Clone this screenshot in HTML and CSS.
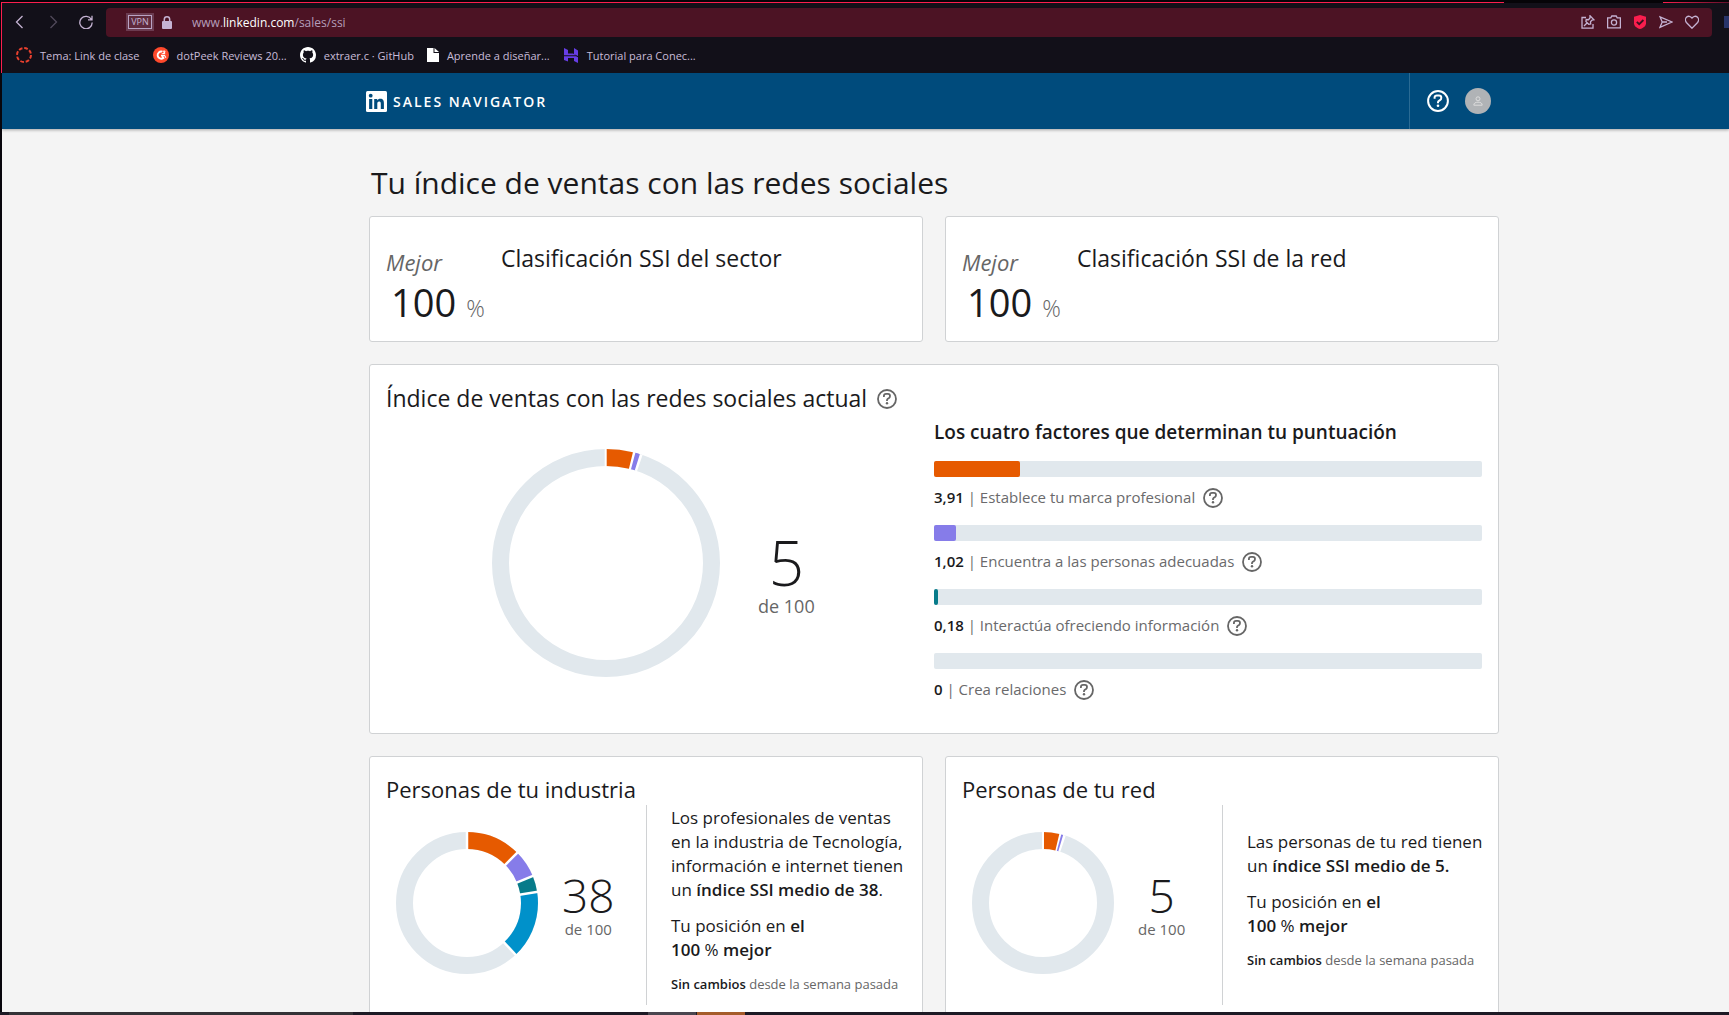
FILE: index.html
```html
<!DOCTYPE html>
<html lang="es">
<head>
<meta charset="utf-8">
<title>Índice de ventas con las redes sociales</title>
<link rel="stylesheet" href="styles.css">
</head>
<body>
<svg class="defs" width="0" height="0" aria-hidden="true">
  <symbol id="help" viewBox="0 0 20 20">
    <circle cx="10" cy="10" r="9" fill="none" stroke="currentColor" stroke-width="1.8"/>
    <path d="M6.9 8V6.9Q6.9 4.9 9 4.9h1.9Q13 4.9 13 7q0 1.500-1.200 2.200L10.800 9.800Q10 10.300 10 11.200v.8" fill="none" stroke="currentColor" stroke-width="1.800"/>
    <circle cx="10" cy="14.300" r="1.200" fill="currentColor"/>
  </symbol>
</svg>

<header class="browser">
  <div class="tab-edge"><span class="edge-active"></span><span class="edge-next"></span></div>
  <div class="toolbar">
    <div class="history">
      <button class="tool" aria-label="Atrás"><svg width="14" height="14" viewBox="0 0 14 14"><path d="M9.500 1 3.500 7l6 6"/></svg></button>
      <button class="tool dim" aria-label="Adelante"><svg width="14" height="14" viewBox="0 0 14 14"><path d="M4.500 1l6 6-6 6"/></svg></button>
      <button class="tool" aria-label="Recargar"><svg width="14" height="14" viewBox="0 0 14 14"><path d="M12.400 4.500A6.200 6.200 0 1 0 13.200 7.500M13 .8v4H9"/></svg></button>
    </div>
    <div class="address">
      <span class="vpn">VPN</span>
      <svg class="lock" width="10" height="13" viewBox="0 0 10 13"><path d="M2.300 6V3.500a2.700 2.700 0 0 1 5.400 0V6" fill="none" stroke="#c5b3d3" stroke-width="1.500"/><rect y="5" width="10" height="8" rx="1" fill="#c5b3d3"/></svg>
      <span class="url">www.<b>linkedin.com</b>/sales/ssi</span>
      <div class="actions">
        <button class="tool" aria-label="Editar"><svg width="14" height="14" viewBox="0 0 14 14"><path d="M5 2.500H1v10.700h11V9M9 .8l4 4-2 .2-1.500 1.800.2 2.200-2 .3-2.800-2.800.3-2 2.300.2L9 3zM6 8l-3 3"/></svg></button>
        <button class="tool" aria-label="Captura"><svg width="14" height="14" viewBox="0 0 14 14"><path d="M.6 2.800h3.200l1-1.800h4.400l1 1.800h3.200v10H.6z"/><circle cx="7" cy="7.500" r="2.600"/></svg></button>
        <button class="tool" aria-label="Protección"><svg width="14" height="14" viewBox="0 0 14 14"><path d="M7 0l6 1.800v6.400c0 3-3 4.800-6 5.800-3-1-6-2.800-6-5.800V1.800z" fill="#fa1e4e" stroke="none"/><path d="M3.800 6.800l2.400 2.400 4.200-4.200" stroke="#3c1020" stroke-width="1.800"/></svg></button>
        <button class="tool" aria-label="Enviar"><svg width="14" height="14" viewBox="0 0 14 14"><path d="M1 1.800 13 7 1 12.300 3.200 7zM3.200 7H8"/></svg></button>
        <button class="tool" aria-label="Favoritos"><svg width="14" height="14" viewBox="0 0 14 14"><path d="M7 13.200 1.400 7.500C.2 6 .2 3.500 1.700 2.100 3.200.700 5.500 1 7 3c1.500-2 3.800-2.300 5.300-.9 1.500 1.400 1.500 3.900.3 5.400z"/></svg></button>
      </div>
    </div>
    <span class="extension"></span>
  </div>
  <nav class="bookmarks">
    <a href="#"><svg width="16" height="16" viewBox="0 0 16 16"><circle cx="8" cy="8" r="7" fill="none" stroke="#e8402e" stroke-width="2" stroke-dasharray="3.700 1.798"/></svg>Tema: Link de clase</a>
    <a href="#"><svg width="16" height="16" viewBox="0 0 16 16"><circle cx="8" cy="8" r="8" fill="#ff492c"/><path d="M9.300 4.700A3.600 3.600 0 1 0 10.400 11L9 8.900" fill="none" stroke="#fff" stroke-width="1.900"/><path d="M9.700 4.400q2.300-1 2.200.4 0 .8-2.100 2h2.400M8 8.500h3.600l1.300 2.300" fill="none" stroke="#fff" stroke-width="1.100"/></svg>dotPeek Reviews 20...</a>
    <a href="#"><svg width="16" height="16" viewBox="0 0 16 16"><path fill="#fff" d="M8 0C3.580 0 0 3.580 0 8c0 3.540 2.290 6.530 5.470 7.590.4.070.55-.17.55-.38 0-.19-.01-.82-.01-1.490-2.010.37-2.530-.49-2.690-.94-.09-.23-.48-.94-.82-1.130-.28-.15-.68-.52-.01-.53.630-.01 1.080.58 1.230.82.720 1.210 1.870.87 2.330.66.070-.52.280-.87.510-1.070-1.780-.2-3.640-.89-3.640-3.950 0-.87.310-1.590.82-2.150-.08-.2-.36-1.020.08-2.120 0 0 .67-.21 2.200.82.640-.18 1.320-.27 2-.27s1.360.09 2 .27c1.530-1.040 2.200-.82 2.200-.82.440 1.100.160 1.920.08 2.120.510.56.820 1.270.820 2.150 0 3.070-1.870 3.750-3.650 3.950.290.25.540.73.540 1.480 0 1.070-.01 1.930-.01 2.200 0 .21.150.46.550.38A8 8 0 0 0 16 8c0-4.420-3.580-8-8-8z"/></svg>extraer.c · GitHub</a>
    <a href="#"><svg width="12" height="16" viewBox="0 0 12 16"><path fill="#fff" d="M0 1h6.500v5H12v9H0zM7.500 1 12 5H7.500z"/></svg>Aprende a diseñar...</a>
    <a href="#"><svg width="16" height="16" viewBox="0 0 16 16"><path fill="#673de6" d="M1 1l4 2v3.500h5L13 8.200H1zM11 1l4 2.500V9l-4-2zM1 9.300h12l2 1V16l-4-2v-3H5v3.500L1 13z"/></svg>Tutorial para Conec...</a>
  </nav>
</header>

<div class="viewport">
  <header class="topbar">
    <a class="brand" href="#">
      <svg width="21" height="21" viewBox="0 0 21 21"><rect width="21" height="21" rx="1.500" fill="#fff"/><g fill="#004b7c"><circle cx="4.700" cy="4.700" r="1.900"/><path d="M3.100 8h3.200v10H3.100zM8.200 8h3v1.400c.6-1 1.700-1.600 3-1.600 3 0 3.700 1.900 3.700 4.500V18h-3.100v-5c0-1.300-.1-2.600-1.600-2.600-1.600 0-1.900 1.200-1.900 2.500V18H8.200z"/></g></svg>
      SALES NAVIGATOR
    </a>
    <div class="account">
      <button class="help light" aria-label="Ayuda"><svg width="22" height="22"><use href="#help"/></svg></button>
      <button class="avatar" aria-label="Perfil"><svg width="10" height="10" viewBox="0 0 10 10"><circle cx="5" cy="2.800" r="2"/><path d="M.8 9.200c0-2 1.500-3 4.200-3s4.200 1 4.200 3z"/></svg></button>
    </div>
  </header>

  <main>
    <h1>Tu índice de ventas con las redes sociales</h1>

    <div class="pair">
      <section class="card rank">
        <div class="rank-score"><em>Mejor</em><p><strong>100</strong> <span>%</span></p></div>
        <h2>Clasificación SSI del sector</h2>
      </section>
      <section class="card rank">
        <div class="rank-score"><em>Mejor</em><p><strong>100</strong> <span>%</span></p></div>
        <h2>Clasificación SSI de la red</h2>
      </section>
    </div>

    <section class="card current">
      <div class="current-score">
        <h2>Índice de ventas con las redes sociales actual <button class="help" aria-label="Ayuda"><svg width="20" height="20"><use href="#help"/></svg></button></h2>
        <div class="gauge">
          <svg width="228" height="228" viewBox="-114 -114 228 228" fill="none" stroke-width="17">
            <circle r="105.500" stroke="#e1e8ed"/>
            <g transform="rotate(-90)">
              <circle r="105.500" pathLength="100" stroke="#fff" stroke-dasharray="5.200 94.800"/>
              <circle r="105.500" pathLength="100" stroke="#e65a00" stroke-dasharray="3.800 96.200"/>
              <circle r="105.500" pathLength="100" stroke="#867ce9" stroke-dasharray="0 4.150 .65 95.200"/>
            </g>
            <path d="M-.3-114v17" stroke="#fff" stroke-width="2"/>
          </svg>
          <p class="score"><strong>5</strong>de 100</p>
        </div>
      </div>
      <div class="factors">
        <h3>Los cuatro factores que determinan tu puntuación</h3>
        <div class="bar"><span class="orange" style="width:15.700%"></span></div>
        <p><b>3,91</b> | Establece tu marca profesional <button class="help" aria-label="Ayuda"><svg width="20" height="20"><use href="#help"/></svg></button></p>
        <div class="bar"><span class="violet" style="width:4.080%"></span></div>
        <p><b>1,02</b> | Encuentra a las personas adecuadas <button class="help" aria-label="Ayuda"><svg width="20" height="20"><use href="#help"/></svg></button></p>
        <div class="bar"><span class="teal" style="width:.720%"></span></div>
        <p><b>0,18</b> | Interactúa ofreciendo información <button class="help" aria-label="Ayuda"><svg width="20" height="20"><use href="#help"/></svg></button></p>
        <div class="bar"></div>
        <p><b>0</b> | Crea relaciones <button class="help" aria-label="Ayuda"><svg width="20" height="20"><use href="#help"/></svg></button></p>
      </div>
    </section>

    <div class="pair">
      <section class="card people">
        <h2>Personas de tu industria</h2>
        <div class="people-body">
          <div class="gauge small">
            <svg width="142" height="142" viewBox="-71 -71 142 142" fill="none" stroke-width="17">
              <circle r="62.500" stroke="#e1e8ed"/>
              <g transform="rotate(-90)">
                <circle r="62.500" pathLength="100" stroke="#e65a00" stroke-dasharray="12.500 87.500"/>
                <circle r="62.500" pathLength="100" stroke="#867ce9" stroke-dasharray="0 12.500 6.300 81.200"/>
                <circle r="62.500" pathLength="100" stroke="#077b8a" stroke-dasharray="0 18.800 3.700 77.500"/>
                <circle r="62.500" pathLength="100" stroke="#0091ca" stroke-dasharray="0 22.500 15.500 62"/>
                <g stroke="#fff" stroke-width="2.500">
                  <path d="M53 0h19"/>
                  <path d="M53 0h19" transform="rotate(45)"/>
                  <path d="M53 0h19" transform="rotate(67.700)"/>
                  <path d="M53 0h19" transform="rotate(81)"/>
                  <path d="M53 0h19" transform="rotate(136.800)"/>
                </g>
              </g>
            </svg>
            <p class="score"><strong>38</strong>de 100</p>
          </div>
          <div class="summary">
            <p>Los profesionales de ventas<br>en la industria de Tecnología,<br>información e internet tienen<br>un <b>índice SSI medio de 38</b>.</p>
            <p>Tu posición en <b>el<br>100</b> % <b>mejor</b></p>
            <small><b>Sin cambios</b> desde la semana pasada</small>
          </div>
        </div>
      </section>
      <section class="card people">
        <h2>Personas de tu red</h2>
        <div class="people-body">
          <div class="gauge small">
            <svg width="142" height="142" viewBox="-71 -71 142 142" fill="none" stroke-width="17">
              <circle r="62.500" stroke="#e1e8ed"/>
              <g transform="rotate(-90)">
                <circle r="62.500" pathLength="100" stroke="#fff" stroke-dasharray="5.200 94.800"/>
                <circle r="62.500" pathLength="100" stroke="#e65a00" stroke-dasharray="3.700 96.300"/>
                <circle r="62.500" pathLength="100" stroke="#867ce9" stroke-dasharray="0 4.150 .45 95.400"/>
              </g>
              <path d="M0-71v17" stroke="#fff" stroke-width="2"/>
            </svg>
            <p class="score"><strong>5</strong>de 100</p>
          </div>
          <div class="summary">
            <p>Las personas de tu red tienen<br>un <b>índice SSI medio de 5.</b></p>
            <p>Tu posición en <b>el<br>100</b> % <b>mejor</b></p>
            <small><b>Sin cambios</b> desde la semana pasada</small>
          </div>
        </div>
      </section>
    </div>
  </main>
</div>

<footer class="taskbar"><span class="search"></span><span class="app"></span><span class="app active"></span></footer>
</body>
</html>
```
FILE: styles.css
```css
* { box-sizing: border-box; }

body {
  margin: 0;
  height: 100vh;
  display: flex;
  flex-direction: column;
  overflow: hidden;
  background: #f4f4f4;
  color: #1a1a1c;
  font-family: "Open Sans", "Noto Sans", sans-serif;
}

h1, h2, h3, p { margin: 0; font-weight: 400; }
b { font-weight: 600; }
a { color: inherit; text-decoration: none; }
button { padding: 0; border: 0; background: none; color: inherit; display: inline-flex; }
svg { display: block; flex: none; }
.defs { position: absolute; }

/* Browser chrome */
.browser {
  flex: none;
  height: 73px;
  border-left: 1px solid #050308;
  background: #121019;
  color: #c8bcd8;
}
.tab-edge { display: flex; height: 3px; padding-top: 2px; background: #060408; justify-content: space-between; }
.edge-active { flex: 0 0 87%; background: #fa1e4e; }
.edge-next { flex: 0 0 66px; background: linear-gradient(90deg, #fa1e4e, #60102a); }
.toolbar { display: flex; align-items: center; height: 38px; border-left: 1px solid #fa1e4e; }
.history { display: flex; flex: none; width: 104px; gap: 19px; padding-left: 11px; }
.tool svg { fill: none; stroke: #c5b3d3; stroke-width: 1.300; }
.tool.dim { opacity: .35; }
.address {
  flex: 1;
  height: 29px;
  display: flex;
  align-items: center;
  padding: 0 13px 0 20px;
  border-radius: 4px;
  background: #4c1324;
}
.vpn {
  width: 28px;
  height: 18px;
  border: 2px solid #6b3b50;
  outline: 1px solid #b9a3c4;
  outline-offset: -3px;
  background: #5f2a3d;
  color: #c5b3d3;
  font-size: 9px;
  line-height: 14px;
  text-align: center;
}
.lock { margin: 0 20px 0 8px; }
.url { flex: 1; font-size: 12px; color: #b59dba; }
.url b { font-weight: 400; color: #fff; }
.actions { display: flex; gap: 12px; }
.extension { flex: none; width: 5px; height: 12px; margin-left: 12px; background: #28346a; }
.bookmarks {
  display: flex;
  align-items: center;
  gap: 13px;
  height: 32px;
  padding: 0 14px 4px;
  border-left: 1px solid #fa1e4e;
  font-size: 11px;
}
.bookmarks a { display: flex; align-items: center; gap: 8px; white-space: nowrap; }

/* Page */
.viewport { flex: 1; min-height: 0; overflow: hidden; border-left: 2px solid #08060c; }
.topbar {
  display: flex;
  justify-content: space-between;
  height: 56px;
  padding: 0 238px 0 364px;
  background: #004b7c;
  box-shadow: 0 1px 3px #0005;
  color: #fff;
}
.brand { display: flex; align-items: center; gap: 6px; font-size: 14px; font-weight: 600; letter-spacing: 2px; }
.account { display: flex; align-items: center; gap: 16px; padding-left: 17px; border-left: 1px solid #2a6b94; }
.avatar { width: 26px; height: 26px; border-radius: 50%; background: #b0b3b6; align-items: center; justify-content: center; }
.avatar svg { fill: none; stroke: #dcdcdc; }
.help { color: #666; vertical-align: middle; }
.help.light { color: #fff; }

main { padding: 32px 230px 0 367px; }
h1 { font-size: 30px; line-height: 44px; padding-left: 2px; margin-bottom: 11px; }
h2 { font-size: 23px; line-height: 32px; }
.card { border: 1px solid #d0d2d4; border-radius: 3px; background: #fff; padding: 16px; }
.pair { display: grid; grid-template-columns: repeat(2, minmax(0, 1fr)); gap: 22px; margin-bottom: 22px; }

.rank { display: flex; height: 126px; padding-top: 25px; }
.rank-score { width: 115px; flex: none; color: #666; font-size: 23px; line-height: 40px; }
.rank-score em { font-size: 22px; }
.rank-score p { padding-left: 5px; }
.rank-score strong { font-size: 38px; font-weight: 400; color: #1a1a1c; margin-right: 4px; }
.rank-score span { font-weight: 300; }

.current { display: grid; grid-template-columns: 1fr 548px; height: 370px; margin-bottom: 22px; padding-top: 17px; }
.current .help { margin: 0 0 4px 4px; }
.gauge { display: flex; align-items: center; gap: 38px; padding: 35px 0 0 106px; }
.score { padding-top: 22px; color: #666; font-size: 18px; line-height: 24px; text-align: center; }
.score strong { display: block; color: #1a1a1c; font-size: 62px; line-height: 64px; font-weight: 300; }

.factors h3 { margin: 34px 0 13px; font-size: 19px; line-height: 32px; font-weight: 600; }
.factors p { height: 48px; font-size: 15px; line-height: 40px; color: #6a6a6c; }
.factors b { color: #1a1a1c; }
.factors .help { margin: 0 0 2px 4px; }
.bar { display: flex; height: 16px; border-radius: 2px; background: #e1e8ed; }
.bar span { border-radius: 2px; }
.orange { background: #e65a00; }
.violet { background: #867ce9; }
.teal { background: #077b8a; }

.people { padding-top: 17px; }
.people h2 { font-size: 22px; line-height: 31px; }
.people-body { display: flex; height: 200px; }
.gauge.small { width: 261px; flex: none; border-right: 1px solid #d0d2d4; gap: 24px; padding: 0 0 4px 10px; }
.small .score { padding-top: 4px; font-size: 15px; line-height: 20px; }
.small .score strong { font-size: 46px; line-height: 48px; }
.summary { display: flex; flex-direction: column; justify-content: center; gap: 12px; padding: 0 0 10px 24px; font-size: 17px; line-height: 24px; white-space: nowrap; }
.summary small { font-size: 13px; line-height: 20px; color: #666; }
.summary small b { color: #1a1a1c; }

/* System taskbar sliver */
.taskbar { flex: none; display: flex; height: 3px; background: #1d1a25; padding-left: 9px; }
.search { width: 344px; margin-right: 295px; background: #343236; }
.app { width: 48px; margin-right: 1px; background: #4a464f; }
.app.active { background: #a55c2a; }
```
